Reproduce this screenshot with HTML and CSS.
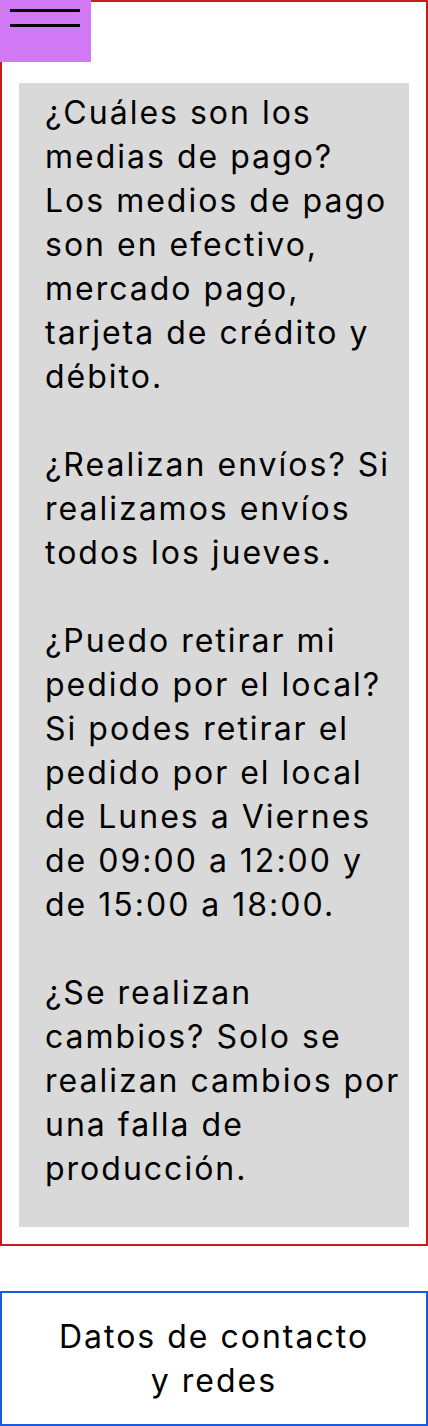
FILE: index.html
```html
<!DOCTYPE html>
<html lang="es">
<head>
<meta charset="utf-8">
<link rel="stylesheet" href="styles.css">
</head>
<body>
<main class="faq-frame">
  <button class="menu-btn" aria-label="menú">
    <span class="menu-line"></span>
    <span class="menu-line"></span>
  </button>
  <section class="faq-card">
    <p>¿Cuáles son los medias de pago? Los medios de pago son en efectivo, mercado pago, tarjeta de crédito y débito.</p>
    <p>¿Realizan envíos? Si realizamos envíos todos los jueves.</p>
    <p>¿Puedo retirar mi pedido por el local? Si podes retirar el pedido por el local de Lunes a Viernes de 09:00 a 12:00 y de 15:00 a 18:00.</p>
    <p>¿Se realizan cambios? Solo se realizan cambios por una falla de producción.</p>
  </section>
</main>
<footer class="contact-box">
  <p>Datos de contacto<br>y redes</p>
</footer>
</body>
</html>
```
FILE: styles.css
```css
* { box-sizing: border-box; }
html, body { margin: 0; padding: 0; background: #fff; }
body {
  width: 428px;
  font-family: Inter, "Noto Sans", sans-serif;
  font-size: 32px;
  line-height: 44px;
  letter-spacing: 2px;
  color: #000;
}
.faq-frame {
  position: relative;
  height: 1246px;
  border: 2px solid #cc1a1a;
  padding: 81px 17px 17px 17px;
}
.menu-btn {
  position: absolute;
  left: -2px;
  top: -2px;
  width: 91px;
  height: 62px;
  margin: 0;
  padding: 9px 0 0 10px;
  border: 0;
  background: #d178f5;
  display: flex;
  flex-direction: column;
  gap: 12px;
  align-items: flex-start;
}
.menu-line {
  display: block;
  width: 70px;
  height: 3px;
  background: #000;
}
.faq-card {
  height: 100%;
  background: #d9d9d9;
  padding: 8px 8px 0 26px;
}
.faq-card p {
  margin: 0 0 44px 0;
}
.faq-card p:last-child { margin-bottom: 0; }
.contact-box {
  margin-top: 45px;
  height: 135px;
  border: 2px solid #1a5ce0;
  display: flex;
  align-items: center;
  justify-content: center;
  text-align: center;
}
.contact-box p { margin: 0; }
```
